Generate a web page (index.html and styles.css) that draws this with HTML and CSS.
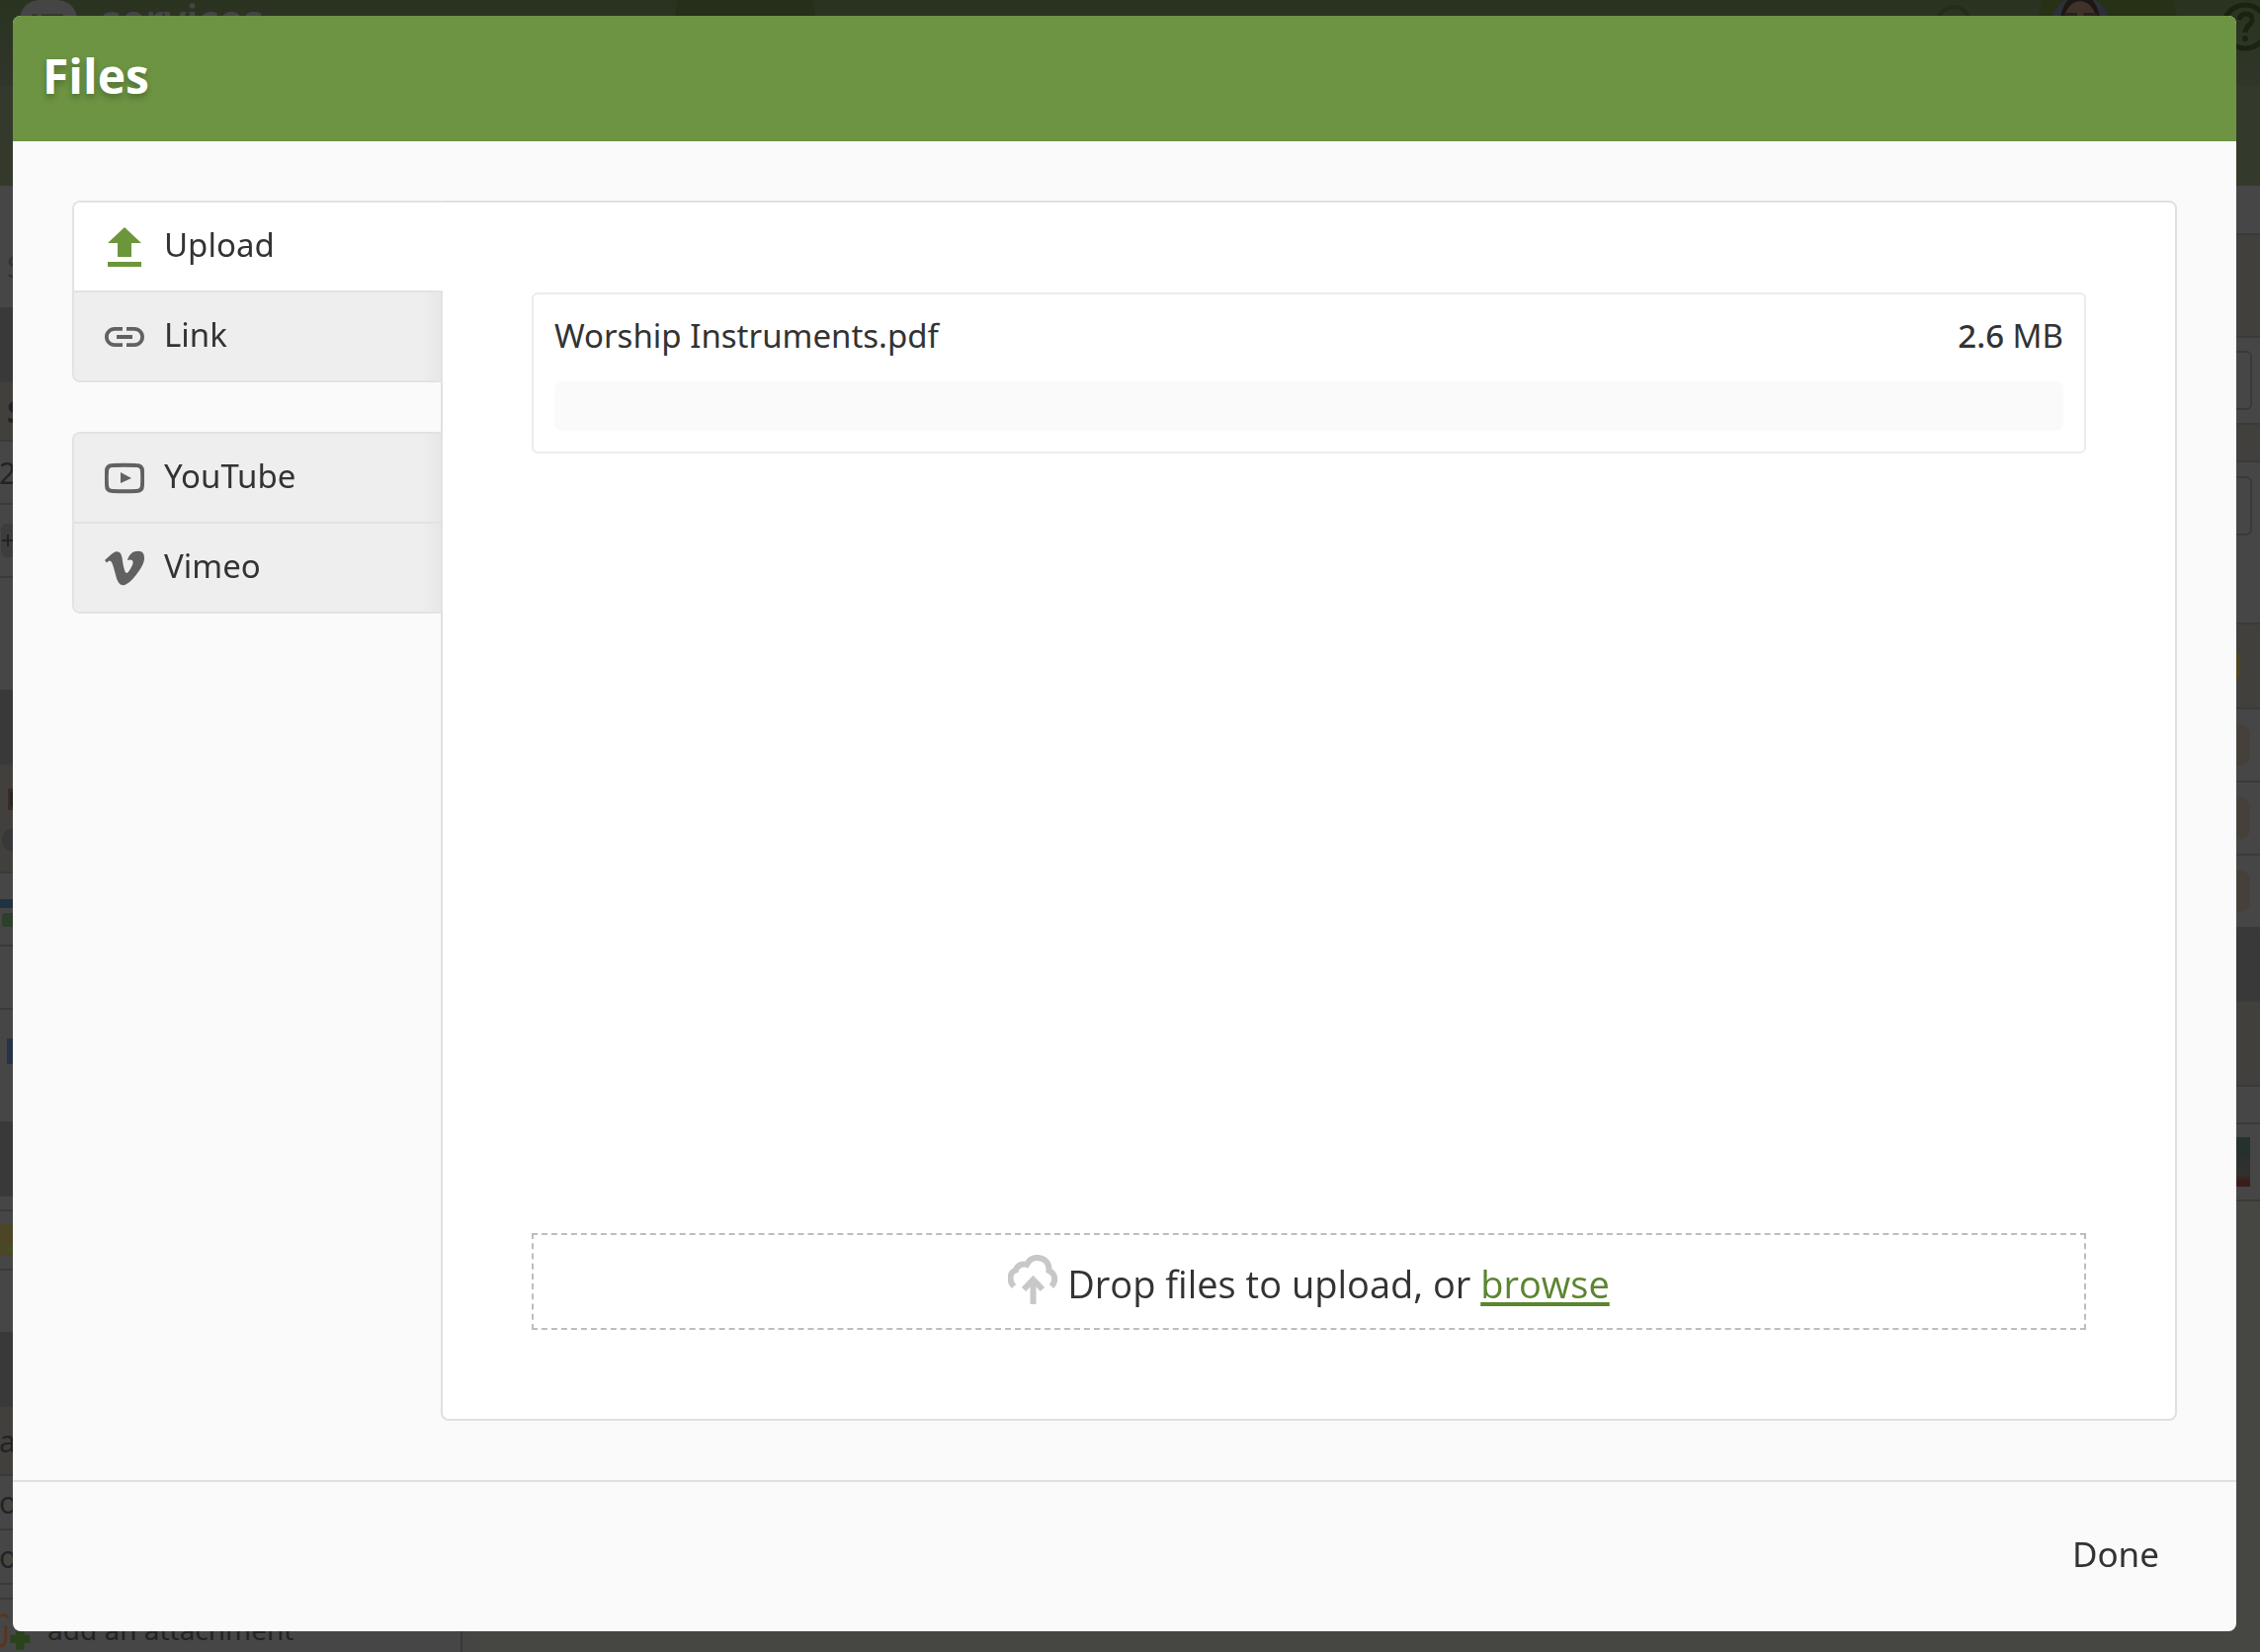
FILE: index.html
```html
<!DOCTYPE html>
<html lang="en">
  <head>
    <meta charset="utf-8" />
    <title>Files</title>
    <link rel="stylesheet" href="styles.css" />
  </head>
  <body>
    <!-- page behind the dialog -->
    <div class="page" aria-hidden="true">
      <div class="topbar">
        <svg class="logo" viewBox="0 0 58 58">
          <rect width="58" height="58" rx="20" fill="#454545" />
          <path d="M12 17h6M22 17h22M12 28h6M22 28h22" stroke="#2b3322" stroke-width="5" />
        </svg>
        <span class="brand">services</span>
        <svg class="current" viewBox="0 0 142 40">
          <circle cx="71" cy="20" r="71" fill="#262f19" />
        </svg>
        <span class="spacer"></span>
        <svg class="search" viewBox="0 0 40 40">
          <circle cx="20" cy="20" r="16" fill="none" stroke="#242d1a" stroke-width="4" />
        </svg>
        <svg class="avatar" viewBox="0 0 140 60">
          <circle cx="70" cy="22" r="70" fill="#25300f" fill-opacity="0.6" />
          <circle cx="42" cy="26" r="30" fill="#2b303b" />
          <ellipse cx="42" cy="22" rx="20" ry="28" fill="#1c1712" />
          <ellipse cx="42" cy="24" rx="17" ry="23" fill="#3f322a" />
          <path d="M25 13h14v5H26zM45 13h14v5H46z" fill="#29211e" />
        </svg>
        <svg class="help" viewBox="0 0 50 50">
          <circle cx="25" cy="25" r="22" fill="none" stroke="#1a2310" stroke-width="5" />
          <path d="M19 18q1-6 7-6 6 0 6 6c0 5-7 6-7 13" fill="none" stroke="#1a2310" stroke-width="5" />
          <circle cx="25" cy="37" r="3" fill="#1a2310" />
        </svg>
      </div>
      <div class="columns">
        <div class="column">
          <div class="row row-h125"><span class="faded">S</span></div>
          <div class="row row-dark row-h74"></div>
          <div class="row row-warm row-h60"><b>S</b></div>
          <div class="row row-h64"><span class="flush">2</span></div>
          <div class="row row-h74">
            <svg class="chip" viewBox="0 0 40 36">
              <rect x="1" y="1" width="38" height="34" rx="6" fill="#3d3d3d" />
              <path d="M2 18h12M8 12v12" stroke="#222" stroke-width="2" />
            </svg>
          </div>
          <div class="row row-h115"></div>
          <div class="row row-dark row-h74"></div>
          <div class="row row-warm row-h110">
            <svg class="chip" viewBox="0 0 40 80">
              <rect x="8" y="10" width="24" height="22" fill="#3c2a28" />
              <path d="M12 14h14M12 21h14M12 28h14M12 14v14" stroke="#222" stroke-width="3" />
              <rect x="2" y="50" width="36" height="24" rx="12" fill="#383838" />
            </svg>
          </div>
          <div class="row row-h74">
            <svg class="chip" viewBox="0 0 40 60">
              <rect y="20" width="40" height="9" fill="#1f3440" />
              <rect x="2" y="34" width="14" height="14" rx="3" fill="#2d402c" />
            </svg>
          </div>
          <div class="row row-h64"></div>
          <div class="row row-h115">
            <svg class="chip" viewBox="0 0 40 60">
              <rect x="7" y="2" width="28" height="26" fill="#263346" />
            </svg>
          </div>
          <div class="row row-dark row-h74"></div>
          <div class="row row-h15"></div>
          <div class="row row-h60">
            <svg class="chip" viewBox="0 0 40 32">
              <rect width="40" height="32" fill="#4c4626" />
              <path d="M8 25h8" stroke="#3d5221" stroke-width="6" />
            </svg>
          </div>
          <div class="row row-h64"></div>
          <div class="row row-dark row-h74"></div>
          <div class="row row-warm row-h70"><span class="flush">a</span></div>
          <div class="row row-h55"><span class="flush">o</span></div>
          <div class="row row-h55"><span class="flush">o</span></div>
          <div class="row row-h15"></div>
          <div class="row attach">
            <svg class="attach-icon" viewBox="0 0 34 48">
              <path d="M0 10q7-4 8 2M6 20v16q-2 6-6 6" fill="none" stroke="#5a341f" stroke-width="3" />
              <path d="M17 23h9v7h6v9h-6v7h-9v-7h-6v-9h6z" fill="#2a431d" />
            </svg>
            <span>add an attachment</span>
          </div>
        </div>
        <div class="column column-wide">
          <div class="row row-h50"></div>
          <div class="row row-warm row-h104"></div>
          <div class="row row-h88"><div class="field"></div></div>
          <div class="row row-warm row-h38"></div>
          <div class="row row-h164"><div class="field"></div></div>
          <div class="row row-warm row-h86"><div class="tag tag-yellow"></div></div>
          <div class="row row-h74"><div class="tag"></div></div>
          <div class="row row-h74"><div class="tag"></div></div>
          <div class="row row-h74"><div class="tag"></div></div>
          <div class="row row-dark row-h74"></div>
          <div class="row row-warm row-h86"></div>
          <div class="row row-h38"></div>
          <div class="row row-h78"><div class="thumb"></div></div>
        </div>
      </div>
    </div>

    <div class="overlay">
      <section class="modal" role="dialog" aria-labelledby="modal-title">
        <header class="modal-header">
          <h1 id="modal-title">Files</h1>
        </header>

        <div class="modal-body">
          <nav class="tabs">
            <div class="tab-group">
              <button class="tab active" type="button">
                <svg class="icon" viewBox="0 0 40 40">
                  <path d="M20 0l17 16h-10v14H13V16H3zM3 35h34v5H3z" />
                </svg>
                <span class="tab-label">Upload</span>
              </button>
              <button class="tab" type="button">
                <svg class="icon" viewBox="2 2 20 20">
                  <path d="M3.9 12c0-1.71 1.39-3.1 3.1-3.1h4V7H7c-2.76 0-5 2.24-5 5s2.24 5 5 5h4v-1.9H7c-1.71 0-3.1-1.39-3.1-3.1zM8 13h8v-2H8v2zm9-6h-4v1.9h4c1.71 0 3.1 1.39 3.1 3.1s-1.39 3.1-3.1 3.1h-4V17h4c2.76 0 5-2.24 5-5s-2.24-5-5-5z" />
                </svg>
                <span class="tab-label">Link</span>
              </button>
            </div>
            <div class="tab-group">
              <button class="tab" type="button">
                <svg class="icon" viewBox="0 0 40 40">
                  <path d="M8 7Q20 6.500 32 7 38 7 38 13 38.500 20 38 27 38 33 32 33 20 33.500 8 33 2 33 2 27 1.500 20 2 13 2 7 8 7z" fill="none" stroke="#616161" stroke-width="4" />
                  <path d="M16 14l11 6-11 5z" />
                </svg>
                <span class="tab-label">YouTube</span>
              </button>
              <button class="tab" type="button">
                <svg class="icon" viewBox="0 0 24 24">
                  <path d="M23.9765 6.4168c-.105 2.338-1.739 5.5429-4.894 9.6088-3.2679 4.247-6.0258 6.3699-8.2898 6.3699-1.409 0-2.578-1.294-3.553-3.881l-1.9179-7.1138c-.719-2.584-1.488-3.878-2.312-3.878-.179 0-.806.378-1.8809 1.132l-1.129-1.457a315.06 315.06 0 003.501-3.1279c1.579-1.368 2.765-2.085 3.5539-2.159 1.867-.18 3.016 1.1 3.447 3.838.465 2.953.789 4.789.971 5.5069.5389 2.45 1.1309 3.674 1.7759 3.674.502 0 1.256-.796 2.265-2.385 1.004-1.589 1.54-2.797 1.612-3.628.144-1.371-.395-2.061-1.614-2.061-.574 0-1.167.121-1.777.391 1.186-3.8679 3.434-5.7568 6.7619-5.6368 2.4729.06 3.6279 1.664 3.4929 4.7969z" />
                </svg>
                <span class="tab-label">Vimeo</span>
              </button>
            </div>
          </nav>

          <div class="panel">
            <div class="file">
              <div class="file-info">
                <span>Worship Instruments.pdf</span>
                <span><b>2.6</b> MB</span>
              </div>
              <div class="progress"></div>
            </div>

            <div class="dropzone">
              <svg class="cloud" viewBox="0 0 50 50">
                <path d="M6 32C1 27 1 18 8 15.500 9 11 14 8.500 19 10 22 4 27 2.500 31 3 38 4 42 9 41.500 16 48 19 49 27 44 32" />
                <path d="M25.500 50V26M16 35l9.500-10 9.500 10" />
              </svg>
              <p>Drop files to upload, or <a href="#">browse</a></p>
            </div>
          </div>
        </div>

        <footer class="modal-footer">
          <button class="done" type="button">Done</button>
        </footer>
      </section>
    </div>
  </body>
</html>
```
FILE: styles.css
```css
* {
  box-sizing: border-box;
}
body {
  margin: 0;
  font-family: "Noto Sans", "Open Sans", sans-serif;
  font-size: 33px;
  color: #333;
  background-color: #454543;
}
button {
  font: inherit;
  color: inherit;
  border: none;
  cursor: pointer;
}

/* page behind the dialog */
.page {
  display: flex;
  flex-direction: column;
  height: 100vh;
  overflow: hidden;
  font-size: 30px;
  color: #232323;
}
.topbar {
  display: flex;
  flex-shrink: 0;
  align-items: flex-start;
  height: 188px;
  padding-left: 20px;
  background: linear-gradient(#2a3320, #30362a 87px, #343a2b 87px, #343a2b);
}
.logo {
  width: 58px;
  height: 58px;
}
.brand {
  margin-left: 24px;
  font-size: 42px;
  font-weight: 600;
  line-height: 38px;
  color: #454545;
}
.current {
  width: 142px;
  height: 40px;
  margin-left: 416px;
}
.spacer {
  flex-grow: 1;
}
.search {
  width: 40px;
  height: 40px;
  margin: 3px 66px 0 0;
}
.avatar {
  width: 140px;
  height: 60px;
}
.help {
  width: 50px;
  height: 50px;
  margin: 2px -10px 0 44px;
}
.columns {
  display: flex;
  flex-grow: 1;
}
.column {
  width: 468px;
  border-right: 2px solid #393939;
}
.column-wide {
  flex-grow: 1;
  margin-left: 16px;
  border-right: none;
  background-color: #464643;
}
.row {
  display: flex;
  align-items: center;
  padding-left: 7px;
  border-bottom: 2px solid #3a3a3a;
  background-color: #464646;
}
.column-wide .row {
  justify-content: flex-end;
  padding-right: 8px;
}
.row.row-dark {
  background-color: #393939;
}
.row.row-warm {
  background-color: #41403d;
}
.row-h15 { height: 15px; }
.row-h38 { height: 38px; }
.row-h50 { height: 50px; }
.row-h55 { height: 55px; }
.row-h60 { height: 60px; }
.row-h64 { height: 64px; }
.row-h70 { height: 70px; }
.row-h74 { height: 74px; }
.row-h78 { height: 78px; }
.row-h86 { height: 86px; }
.row-h88 { height: 88px; }
.row-h104 { height: 104px; }
.row-h110 { height: 110px; }
.row-h115 { height: 115px; }
.row-h125 { height: 125px; }
.row-h164 { height: 164px; }
.column-wide .row-h164 {
  align-items: flex-start;
  padding-top: 14px;
}
.faded {
  padding-top: 40px;
  color: #333;
}
.flush {
  margin-left: -8px;
}
.chip {
  width: 40px;
  margin-left: -7px;
}
.field {
  width: 300px;
  height: 60px;
  border: 2px solid #393939;
  border-radius: 6px;
}
.tag {
  width: 60px;
  height: 42px;
  margin-right: 2px;
  border-radius: 10px;
  background-color: #45413a;
}
.tag-yellow {
  height: 26px;
  margin-right: 12px;
  border-radius: 4px;
  background-color: #50441f;
}
.thumb {
  width: 60px;
  height: 50px;
  margin-right: 2px;
  background: linear-gradient(#26302f 30%, #33302d 75%, #3a1d1a 90%);
}
.attach {
  gap: 16px;
  height: 62px;
  padding-left: 0;
  font-size: 28px;
}
.attach-icon {
  width: 32px;
  height: 46px;
}

/* dialog */
.overlay {
  position: fixed;
  inset: 0;
  display: flex;
  padding: 16px 24px 21px 13px;
}
.modal {
  display: flex;
  flex-direction: column;
  flex-grow: 1;
  border-radius: 8px;
  overflow: hidden;
  background-color: #fafafa;
}
.modal-header {
  padding: 29px 30px 34px;
  background-color: #6c9442;
}
.modal-header h1 {
  margin: 0;
  font-family: "Open Sans", sans-serif;
  font-size: 48px;
  font-weight: 700;
  line-height: 64px;
  color: #fff;
  text-shadow: 0 4px 6px rgba(0, 0, 0, 0.25);
}
.modal-body {
  display: flex;
  flex-grow: 1;
  padding: 60px;
}

/* tabs */
.tabs {
  display: flex;
  flex-direction: column;
  gap: 50px;
  width: 375px;
  margin-right: -2px;
  z-index: 1;
}
.tab-group {
  border: 2px solid #e3e3df;
  border-right: none;
  border-radius: 8px 0 0 8px;
  overflow: hidden;
}
.tab {
  display: flex;
  align-items: center;
  gap: 20px;
  width: 100%;
  height: 89px;
  padding: 0 31px;
  border-right: 2px solid #e3e3df;
  background: linear-gradient(to left, #e7e7e7, #eee 20px);
}
.tab + .tab {
  height: 91px;
  border-top: 2px solid #e3e3df;
}
.tab.active {
  border-right: none;
  background: #fff;
}
.tab-label {
  padding-bottom: 4px;
}
.icon {
  width: 40px;
  height: 40px;
  fill: #616161;
}
.active .icon {
  fill: #6b963a;
}

/* upload panel */
.panel {
  display: flex;
  flex-direction: column;
  justify-content: space-between;
  flex-grow: 1;
  padding: 91px 90px 90px;
  border: 2px solid #e0e0e0;
  border-radius: 0 8px 8px 8px;
  background-color: #fff;
}
.file {
  padding: 18px 21px 21px;
  border: 2px solid #ececec;
  border-radius: 6px;
}
.file-info {
  display: flex;
  justify-content: space-between;
  margin-bottom: 22px;
  line-height: 48px;
}
.file-info b {
  font-weight: 500;
}
.progress {
  height: 50px;
  border-radius: 8px;
  background-color: #fafafa;
}
.dropzone {
  display: flex;
  align-items: center;
  justify-content: center;
  gap: 10px;
  height: 98px;
  padding-bottom: 4px;
  border: 2px dashed #bdbdbd;
  font-family: "Open Sans", sans-serif;
  font-size: 38px;
}
.dropzone p {
  margin: 0;
  padding-top: 8px;
}
.dropzone a {
  color: #5b8530;
  text-decoration-thickness: 4px;
  text-underline-offset: 4px;
}
.cloud {
  width: 50px;
  height: 50px;
  fill: none;
  stroke: #c8c8c8;
  stroke-width: 6;
}

/* footer */
.modal-footer {
  display: flex;
  justify-content: flex-end;
  align-items: center;
  height: 153px;
  padding: 0 78px 6px 0;
  border-top: 2px solid #e0e0e0;
}
.done {
  padding: 0;
  background: none;
  font-size: 35px;
}
```
